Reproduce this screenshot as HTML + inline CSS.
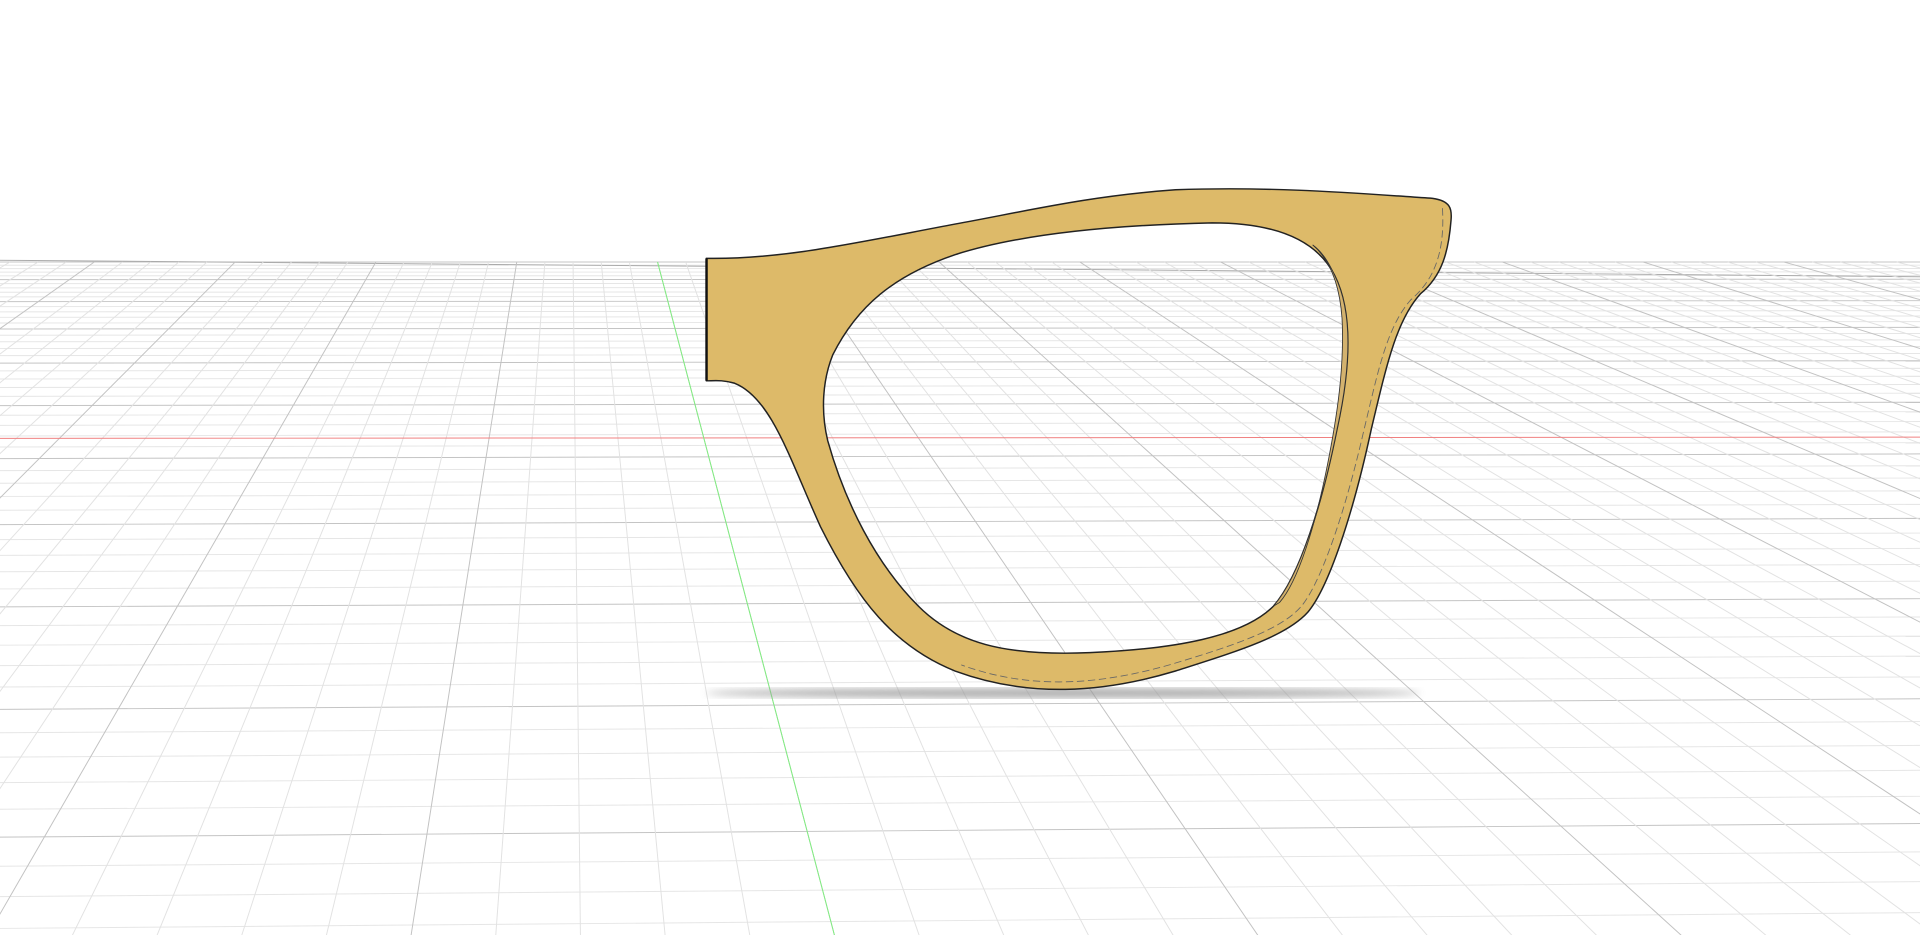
<!DOCTYPE html>
<html><head><meta charset="utf-8"><style>html,body{margin:0;padding:0;background:#fff;overflow:hidden}svg{display:block}</style></head>
<body>
<svg id="s" width="1920" height="935" viewBox="0 0 1568 763.6" preserveAspectRatio="none" xmlns="http://www.w3.org/2000/svg">
<defs>
<filter id="b"><feGaussianBlur stdDeviation="3"/></filter>
<clipPath id="g"><rect x="0" y="212" width="1568" height="560"/></clipPath>
</defs>
<g id="grid" clip-path="url(#g)" stroke-width="0.8" fill="none"></g>
<ellipse cx="868" cy="566" rx="292" ry="4" fill="#999" filter="url(#b)" opacity="0.8"/>
<path fill="#DDBA69" stroke="#222" stroke-width="1.2" fill-rule="evenodd" d="M577,211 C640,212 700,198 780,183 C840,172 890,160 960,155 C1040,152 1110,158 1170,162 C1184,164 1186,170 1185,180 C1183,205 1178,225 1160,240 C1140,262 1132,300 1120,350 C1105,420 1085,480 1068,500 C1050,520 1010,532 960,548 C900,566 840,570 780,548 C730,528 700,490 670,430 C645,375 630,325 600,313 C590,310 583,311 577,311 Z M680,290 C700,250 730,225 780,208 C830,192 900,184 990,182 C1040,182 1075,195 1090,225 C1105,255 1103,300 1092,350 C1080,410 1062,470 1040,495 C1015,520 960,530 890,533 C820,536 780,525 750,495 C715,460 690,410 676,360 C670,335 672,310 680,290 Z"/>
<path fill="#D3B26E" stroke="#333" stroke-width="0.7" d="M1072,200 C1086,212 1094,232 1096,260 C1098,300 1092,340 1084,380 C1074,430 1060,475 1045,492 L1040,495 C1062,470 1080,410 1092,350 C1103,300 1105,255 1090,225 C1085,214 1080,206 1072,200 Z"/>
<path fill="none" stroke="#666" stroke-width="0.7" stroke-dasharray="6 3" d="M1178,170 C1180,205 1172,228 1152,245 C1132,268 1125,305 1113,355 C1098,420 1078,478 1062,496 C1045,515 1005,528 955,543 C895,560 840,563 785,543"/>
<line x1="577" y1="211" x2="577" y2="311" stroke="#111" stroke-width="2"/>
</svg>
<script>
var g=document.getElementById('grid'),h='';
var y=214,st=2.6,n=0;
while(y<780){var c=(n%5==0)?'#c4c4c4':'#e6e6e6';var tilt=(y-214)*0.012;
h+='<line x1="0" y1="'+(y+tilt)+'" x2="1568" y2="'+(y-tilt)+'" stroke="'+c+'"/>';y+=st;st*=1.045;n++;}
h+='<line x1="0" y1="212.5" x2="1568" y2="226" stroke="#aaa"/>';
for(var k=-50;k<=70;k++){var xh=537+k*23,xb=465+(xh-465)*(824/274);var c=(k%5==0?'#c2c2c2':'#e2e2e2');
h+='<line x1="'+xh+'" y1="214" x2="'+xb+'" y2="764" stroke="'+c+'"/>';}
h+='<line x1="0" y1="358" x2="1568" y2="357" stroke="#f08080"/>';
h+='<line x1="537" y1="214" x2="'+(465+72*824/274)+'" y2="764" stroke="#80ee80"/>';
g.innerHTML=h;
</script>
</body></html>
